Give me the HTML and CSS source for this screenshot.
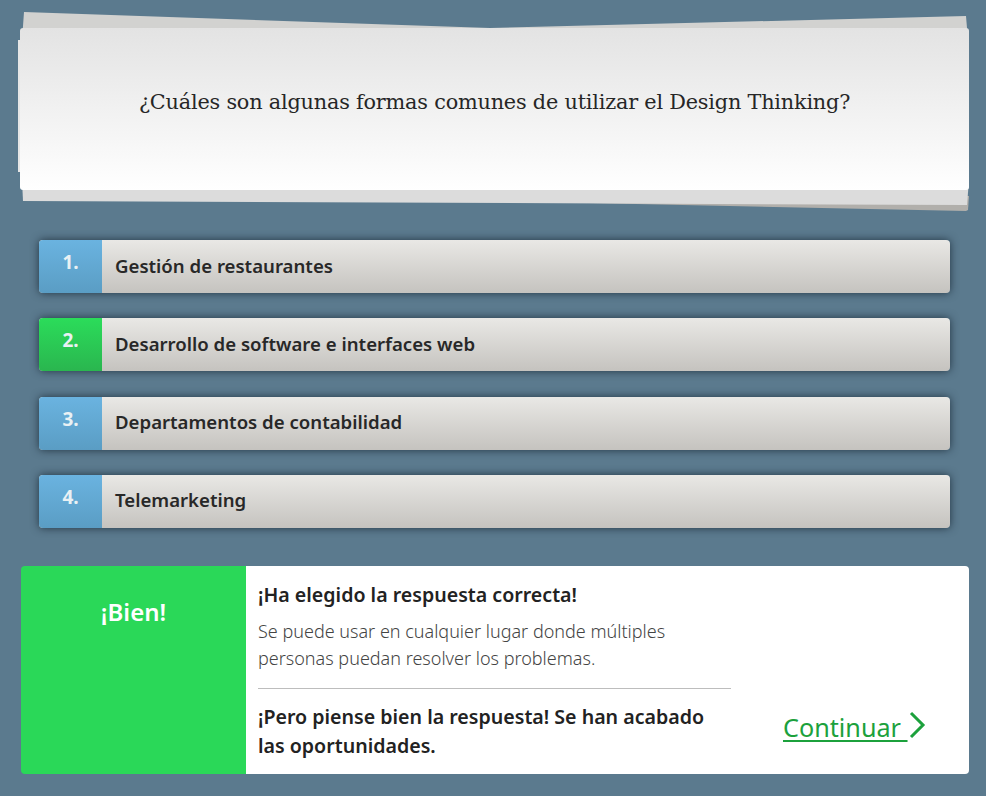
FILE: index.html
```html
<!DOCTYPE html>
<html lang="es">
<head>
<meta charset="utf-8">
<title>Quiz</title>
<link rel="stylesheet" href="styles.css">
</head>
<body>
<div class="page">
  <div class="question">
    <svg class="sheets" width="986" height="230" viewBox="0 0 986 230" aria-hidden="true">
      <polygon points="24,12 490,28 966,16 968,40 22,40" fill="#d2d2d0"/>
      <polygon points="260,196 969,196 968,210 966,211" fill="#b1afab"/>
      <polygon points="22,180 969,180 967,205 23,201" fill="#dcdcdc"/>
      <polygon points="18,40 22,40 22,172 18,172" fill="#e6e6e6"/>
    </svg>
    <div class="question-card">
      <p class="question-text">¿Cuáles son algunas formas comunes de utilizar el Design Thinking?</p>
    </div>
  </div>

  <ul class="answers">
    <li class="answer"><span class="num">1.</span><span class="label">Gestión de restaurantes</span></li>
    <li class="answer correct"><span class="num">2.</span><span class="label">Desarrollo de software e interfaces web</span></li>
    <li class="answer"><span class="num">3.</span><span class="label">Departamentos de contabilidad</span></li>
    <li class="answer"><span class="num">4.</span><span class="label">Telemarketing</span></li>
  </ul>

  <section class="feedback">
    <div class="verdict">¡Bien!</div>
    <div class="feedback-body">
      <div class="feedback-text">
        <h2 class="fb-title">¡Ha elegido la respuesta correcta!</h2>
        <p class="fb-desc">Se puede usar en cualquier lugar donde múltiples personas puedan resolver los problemas.</p>
        <hr class="fb-rule">
        <p class="fb-warn">¡Pero piense bien la respuesta! Se han acabado las oportunidades.</p>
      </div>
      <a class="continue" href="#"><span class="continue-text">Continuar </span><svg class="chev" width="20" height="28" viewBox="0 0 20 28" aria-hidden="true"><polyline points="3,2 15,14 3,26" fill="none" stroke="#1ca13c" stroke-width="3"/></svg></a>
    </div>
  </section>
</div>
</body>
</html>
```

FILE: styles.css
```css
html, body {
  margin: 0;
  padding: 0;
  background: #5b7a8e;
}
body {
  font-family: "Noto Sans", "Open Sans", sans-serif;
  width: 986px;
  height: 796px;
  overflow: hidden;
}
.page {
  padding: 28px 17px 0 20px;
}
.question {
  position: relative;
  height: 162px;
}
.sheets {
  position: absolute;
  left: -20px;
  top: -28px;
}
.question-card {
  position: relative;
  height: 162px;
  border-radius: 3px;
  background: linear-gradient(#e3e3e3, #ffffff);
  display: flex;
  align-items: center;
  justify-content: center;
}
.question-text {
  margin: 0 0 14px;
  font-family: "DejaVu Serif", serif;
  font-size: 20.8px;
  color: #262626;
  letter-spacing: -0.2px;
}
.answers {
  list-style: none;
  margin: 50px 0 0;
  padding: 0 19px;
  display: flex;
  flex-direction: column;
  gap: 25.3px;
}
.answer {
  height: 53px;
  display: flex;
  border-radius: 4px;
  overflow: hidden;
  background: linear-gradient(#e9e8e5, #c5c3bf);
  box-shadow: 0 0 9px rgba(20, 35, 48, 0.8);
}
.num {
  width: 63px;
  flex: none;
  box-sizing: border-box;
  padding-top: 9px;
  text-align: center;
  font-weight: 700;
  font-size: 19px;
  color: #e9f1f4;
  background: linear-gradient(#6ab3e0, #5a9dc4);
}
.correct .num {
  background: linear-gradient(#2bdc5a, #2ab64f);
}
.label {
  display: flex;
  align-items: center;
  padding-left: 13px;
  padding-bottom: 3px;
  font-size: 18.6px;
  font-weight: 600;
  color: #282828;
}
.feedback {
  margin: 38px 0 0 1px;
  height: 208px;
  display: flex;
  border-radius: 4px;
  overflow: hidden;
}
.verdict {
  width: 225px;
  flex: none;
  background: #2ad858;
  color: #ffffff;
  text-align: center;
  font-size: 24px;
  font-weight: 600;
  padding-top: 29px;
  box-sizing: border-box;
}
.feedback-body {
  flex: 1;
  background: #ffffff;
  display: flex;
  padding: 0 12px;
}
.feedback-text {
  width: 473px;
  flex: none;
}
.fb-title {
  margin: 14px 0 0;
  font-size: 19.6px;
  font-weight: 600;
  color: #222;
  line-height: 29px;
}
.fb-desc {
  margin: 9px 0 0;
  font-size: 18px;
  font-weight: 300;
  color: #444;
  line-height: 27px;
}
.fb-rule {
  margin: 16px 0 0;
  border: none;
  border-top: 1px solid #bdbdbd;
}
.fb-warn {
  margin: 13px 0 0;
  font-size: 19.6px;
  font-weight: 600;
  color: #222;
  line-height: 29px;
}
.continue {
  margin: 144px 0 0 52px;
  align-self: flex-start;
  display: flex;
  align-items: center;
  color: #1ca13c;
  font-size: 25.2px;
  text-decoration: none;
}
.continue-text {
  text-decoration: underline;
  text-underline-offset: 3px;
  white-space: pre;
}
.chev {
  margin-top: -3px;
}
```
